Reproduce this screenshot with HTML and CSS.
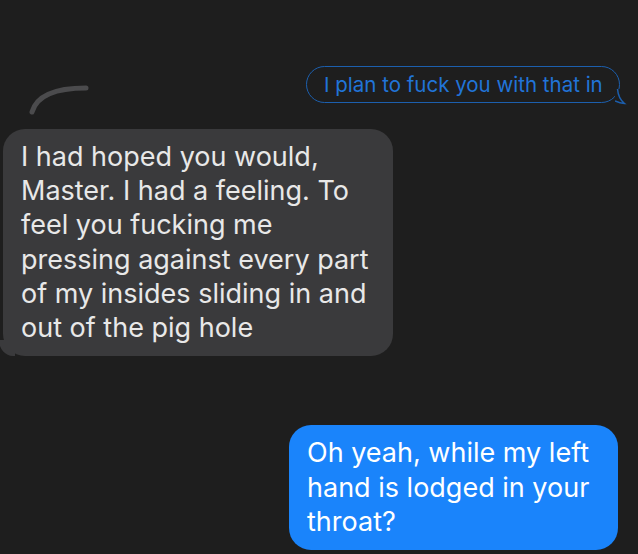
FILE: index.html
```html
<!DOCTYPE html>
<html>
<head>
<meta charset="utf-8">
<link rel="stylesheet" href="styles.css">
</head>
<body>
<div class="chat">
  <div class="row out">
    <div class="bubble outline">I plan to fuck you with that in<svg class="otail" width="12" height="16" viewBox="0 0 12 16"><path d="M2.5 0 C 3 6, 5 11, 9.5 14.5 C 6 14.5, 3 13.5, 0 12" fill="none" stroke="#1c5fae" stroke-width="1.5"/></svg></div>
  </div>
  <div class="row in">
    <svg class="arc" width="70" height="40" viewBox="0 0 70 40"><path d="M8 30 C 12 16, 26 6, 62 6" fill="none" stroke="#4b4b4d" stroke-width="5" stroke-linecap="round"/></svg>
    <div class="bubble gray">I had hoped you would,<br>Master. I had a feeling. To<br>feel you fucking me<br>pressing against every part<br>of my insides sliding in and<br>out of the pig hole</div>
  </div>
  <div class="row out">
    <div class="bubble blue">Oh yeah, while my left<br>hand is lodged in your<br>throat?</div>
  </div>
</div>
</body>
</html>
```
FILE: styles.css
```css
html, body {
  margin: 0;
  background: #1e1e1e;
}
body {
  width: 638px;
  height: 554px;
  overflow: hidden;
  font-family: Inter, "Noto Sans", sans-serif;
}
.chat {
  display: flex;
  flex-direction: column;
  padding-top: 66px;
}
.row {
  display: flex;
  position: relative;
}
.row.out { justify-content: flex-end; }
.bubble {
  box-sizing: border-box;
  position: relative;
  white-space: nowrap;
}
.outline {
  margin-right: 18px;
  width: 314px;
  border: 1.5px solid #1c5fae;
  border-radius: 19px;
  color: #2174d8;
  font-size: 20.5px;
  height: 37px;
  line-height: 36px;
  padding: 0 0 0 17px;
}
.otail {
  position: absolute;
  right: -8px;
  bottom: -2.5px;
  background: #1e1e1e;
}
.in { margin-top: 26px; }
.arc {
  position: absolute;
  left: 24px;
  top: -47px;
}
.gray {
  margin-left: 3px;
  width: 390px;
  background: #3a3a3c;
  color: #e8e8e8;
  border-radius: 22px;
  font-size: 27px;
  line-height: 34.2px;
  padding: 11px 18px 11px 18px;
}
.gray::before {
  content: "";
  position: absolute;
  left: -4px;
  bottom: 0;
  width: 16px;
  height: 16px;
  background: #3a3a3c;
  border-bottom-left-radius: 14px 16px;
}
.blue {
  margin-top: 69px;
  margin-right: 20px;
  width: 329px;
  background: #1a84fb;
  color: #ffffff;
  border-radius: 22px;
  font-size: 27px;
  line-height: 34.5px;
  padding: 11px 18px 10px 18px;
}
```
